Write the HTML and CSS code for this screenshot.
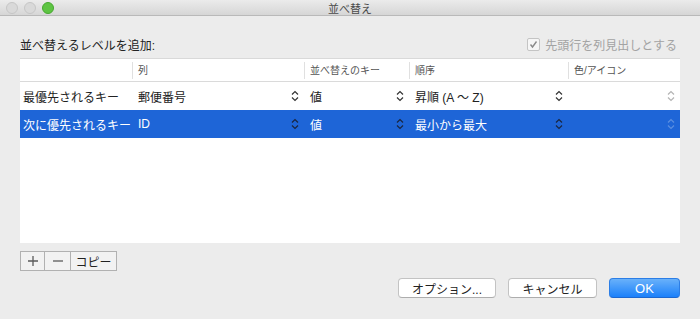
FILE: index.html
```html
<!DOCTYPE html>
<html lang="ja">
  <head>
    <meta charset="UTF-8" />
    <title>並べ替え</title>
    <link rel="stylesheet" href="styles.css">
  </head>
  <body>
    <div class="window">
      <!-- Title bar -->
      <div class="titlebar">
        <div class="lights">
          <span class="light"></span>
          <span class="light"></span>
          <span class="light green"></span>
        </div>
        <div class="title">並べ替え</div>
        <div></div>
      </div>

      <div class="content">
        <div class="head-row">
          <span class="label">並べ替えるレベルを追加:</span>
          <label class="check">
            <span class="box">
              <svg width="9" height="9" viewBox="0 0 9 9"><polyline points="1.5,4.5 3.5,7 7.5,1.5" fill="none" stroke="#8a8a8a" stroke-width="1.4"/></svg>
            </span>
            先頭行を列見出しとする
          </label>
        </div>

        <!-- Sort levels table -->
        <div class="table">
          <div class="row header">
            <div class="cell"></div>
            <div class="cell">列</div>
            <div class="cell">並べ替えのキー</div>
            <div class="cell">順序</div>
            <div class="cell">色/アイコン</div>
          </div>
          <div class="row">
            <div class="cell name">最優先されるキー</div>
            <div class="cell pop"><span>郵便番号</span><svg class="chev"><use href="#chev"/></svg></div>
            <div class="cell pop"><span>値</span><svg class="chev"><use href="#chev"/></svg></div>
            <div class="cell pop"><span>昇順 (A 〜 Z)</span><svg class="chev"><use href="#chev"/></svg></div>
            <div class="cell pop off"><span></span><svg class="chev"><use href="#chev"/></svg></div>
          </div>
          <div class="row selected">
            <div class="cell name">次に優先されるキー</div>
            <div class="cell pop"><span>ID</span><svg class="chev"><use href="#chev"/></svg></div>
            <div class="cell pop"><span>値</span><svg class="chev"><use href="#chev"/></svg></div>
            <div class="cell pop"><span>最小から最大</span><svg class="chev"><use href="#chev"/></svg></div>
            <div class="cell pop off"><span></span><svg class="chev"><use href="#chev"/></svg></div>
          </div>
        </div>

        <div class="tools">
          <button class="tool" aria-label="追加">
            <svg width="10" height="10" viewBox="0 0 10 10"><path d="M5 0V10M0 5H10" stroke="#5a5a5a" stroke-width="1.3"/></svg>
          </button>
          <button class="tool" aria-label="削除">
            <svg width="10" height="10" viewBox="0 0 10 10"><path d="M0 5H10" stroke="#5a5a5a" stroke-width="1.3"/></svg>
          </button>
          <button class="tool copy">コピー</button>
        </div>

        <div class="actions">
          <button class="btn">オプション...</button>
          <button class="btn">キャンセル</button>
          <button class="btn primary">OK</button>
        </div>
      </div>
    </div>

    <svg width="0" height="0" class="defs">
      <symbol id="chev" viewBox="0 0 8 12">
        <polyline points="1,4.5 4,1.5 7,4.5" fill="none" stroke="currentColor" stroke-width="1.2"/>
        <polyline points="1,7.5 4,10.5 7,7.5" fill="none" stroke="currentColor" stroke-width="1.2"/>
      </symbol>
    </svg>
  </body>
</html>
```

FILE: styles.css
```css
body {
  margin: 0;
  font-family: "Liberation Sans", "Noto Sans CJK JP", sans-serif;
  background-color: #ececec;
  color: #222;
}

.window {
  width: 700px;
  height: 319px;
  background-color: #ececec;
  display: flex;
  flex-direction: column;
}

/* Title bar */
.titlebar {
  height: 15px;
  border-bottom: 1px solid #b9b9b9;
  background: linear-gradient(#ebebeb, #d6d6d6);
  display: grid;
  grid-template-columns: 1fr auto 1fr;
  align-items: center;
}

.lights {
  display: flex;
  gap: 6px;
  padding-left: 6px;
}

.light {
  width: 12px;
  height: 12px;
  border-radius: 50%;
  background-color: #d9d9d9;
  border: 0.5px solid #c6c6c6;
  box-sizing: border-box;
}

.light.green {
  background-color: #5ec443;
  border-color: #46a830;
}

.title {
  font-size: 11px;
  color: #4a4a4a;
}

/* Main content */
.content {
  padding: 0 20px;
  display: flex;
  flex-direction: column;
}

.head-row {
  display: flex;
  justify-content: space-between;
  align-items: center;
  height: 16px;
  margin-top: 20px;
}

.label {
  font-size: 12px;
}

.check {
  font-size: 12px;
  color: #a3a3a3;
  display: flex;
  align-items: center;
  gap: 5px;
  margin-right: 3px;
}

.check .box {
  width: 11px;
  height: 11px;
  border: 1px solid #c4c4c4;
  border-radius: 2px;
  background-color: #f6f6f6;
  display: flex;
  align-items: center;
  justify-content: center;
}

/* Table */
.table {
  margin-top: 6px;
  height: 185px;
  background-color: #fff;
  border-top: 1px solid #d9d9d9;
  box-sizing: border-box;
}

.row {
  display: grid;
  grid-template-columns: 112px 172px 105px 159px 112px;
  height: 28px;
  align-items: center;
  font-size: 12px;
}

.row.header {
  height: 22px;
  border-bottom: 1px solid #dadada;
  font-size: 10px;
  color: #555;
}

.header .cell {
  border-left: 1px solid #e0e0e0;
  height: 17px;
  line-height: 17px;
  padding-left: 5px;
}

.header .cell:first-child {
  border-left: none;
}

.cell {
  white-space: nowrap;
  overflow: hidden;
  box-sizing: border-box;
}

.cell.name {
  padding-left: 3px;
}

.cell.pop {
  display: flex;
  align-items: center;
  justify-content: space-between;
  padding: 0 5px 0 6px;
  color: #222;
}

.chev {
  width: 8px;
  height: 12px;
  color: #333;
}

.cell.off .chev {
  color: #b4b4b4;
}

.row.selected {
  background-color: #1e65d7;
  color: #fff;
}

.row.selected .cell.pop {
  color: #fff;
}

.row.selected .chev {
  color: #1a2640;
}

.row.selected .cell.off .chev {
  color: #5b8fe0;
}

/* +/- buttons */
.tools {
  display: flex;
  margin-top: 8px;
}

.tool {
  height: 20px;
  width: 25px;
  border: 1px solid #b1b1b1;
  margin-left: -1px;
  background-color: #f2f2f2;
  font-family: inherit;
  padding: 0;
  display: flex;
  align-items: center;
  justify-content: center;
}

.tool:first-child {
  margin-left: 0;
}

.tool:nth-child(2) {
  width: 27px;
}

.tool.copy {
  width: 47px;
  font-size: 12px;
  color: #222;
}

/* Dialog buttons */
.actions {
  display: flex;
  justify-content: flex-end;
  gap: 12px;
  margin-top: 7px;
}

.btn {
  height: 20px;
  padding: 0;
  width: 98px;
  border: 1px solid #c3c3c3;
  border-bottom-color: #adadad;
  border-radius: 4px;
  background-color: #fff;
  font-family: inherit;
  font-size: 12px;
  color: #222;
}

.btn:nth-child(2) {
  width: 89px;
}

.btn.primary {
  width: 71px;
  background: linear-gradient(#69b1fa, #1b80fa);
  border-color: #2c7ee6;
  border-bottom-color: #1b67d0;
  color: #fff;
  font-size: 13px;
}

.defs {
  position: absolute;
}
```
